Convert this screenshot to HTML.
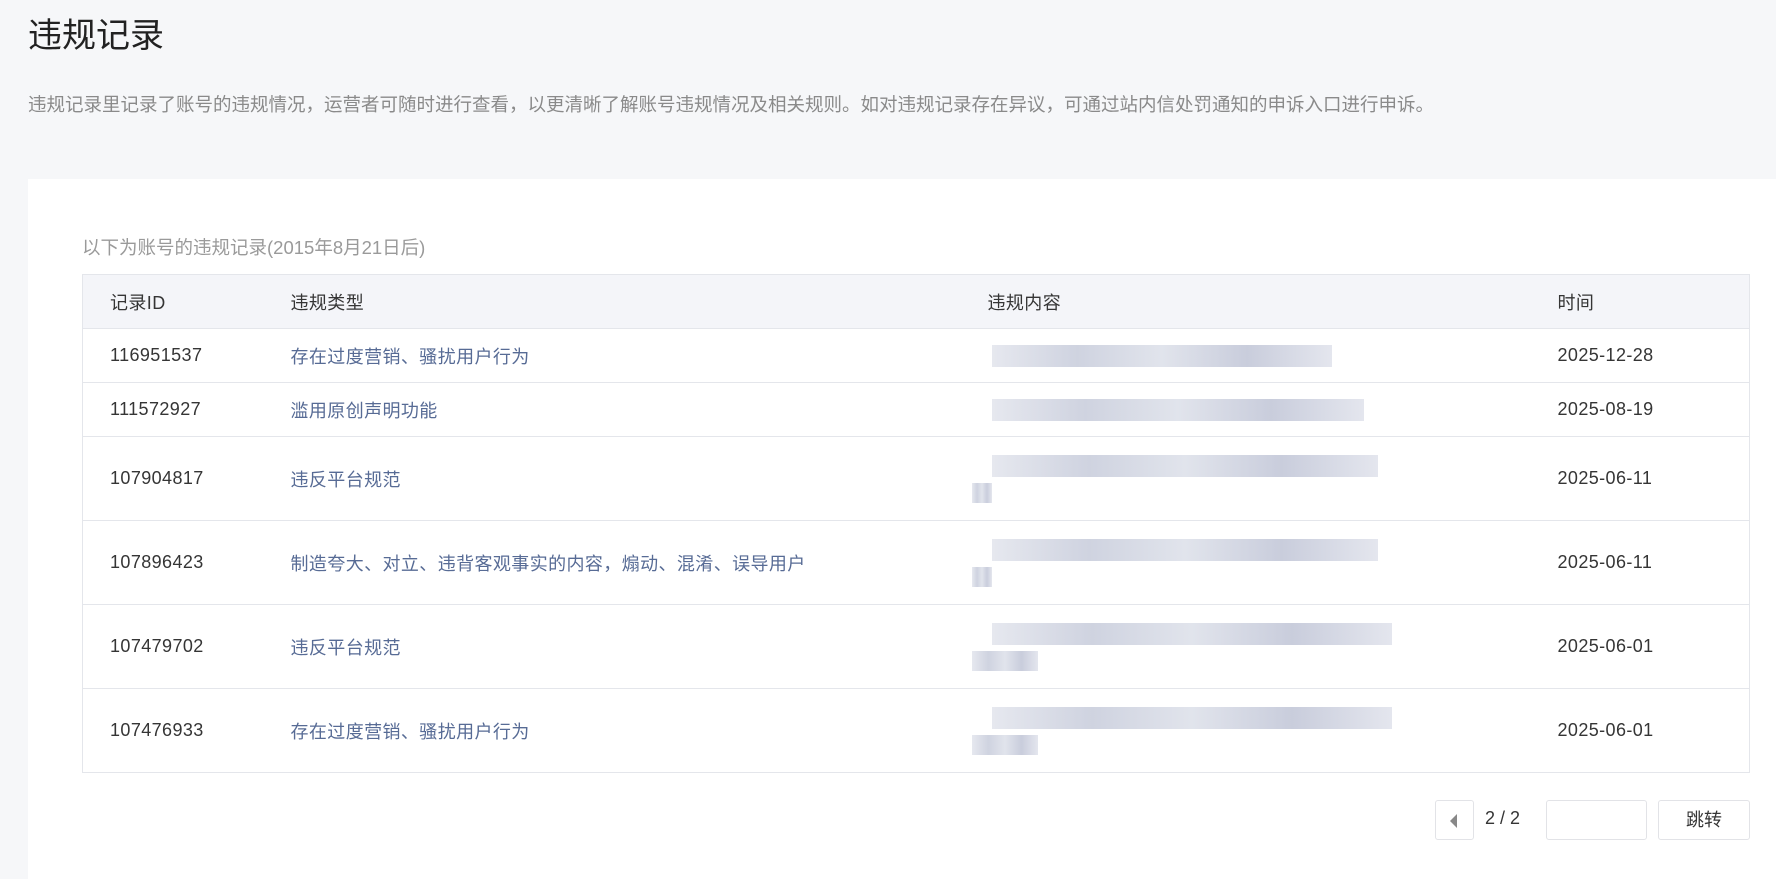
<!DOCTYPE html>
<html><head><meta charset="utf-8"><style>
*{margin:0;padding:0;box-sizing:border-box}
body{width:1776px;height:850px;background:#f6f7f9;font-family:"Liberation Sans","Noto Sans CJK SC",sans-serif;color:#353535;overflow:hidden;position:relative}
.abs{position:absolute;white-space:nowrap}
h1{position:absolute;left:28px;top:8px;font-size:34px;font-weight:normal;color:#222}
.desc{left:28px;top:91px;font-size:18.5px;color:#8a8a8a}
.card{position:absolute;left:28px;top:179px;width:1748px;height:700px;background:#fff}
.cap{left:82px;top:234px;font-size:18.5px;color:#9a9a9a}
table{position:absolute;left:82px;top:274px;width:1668px;border-collapse:collapse;border:1px solid #e4e6eb;font-size:18px;letter-spacing:0.4px}
th{background:#f4f5f9;font-weight:normal;text-align:left;height:54px;color:#353535}
td,th{border-bottom:1px solid #e4e6eb;padding:0}
td{height:54px}
tr.t td{height:84px}
.c1{padding-left:27px;width:208px}
.c2{width:697px}
.c3{width:570px}
a{color:#576b95;text-decoration:none}
.blur{display:inline-block;height:22px;background:linear-gradient(90deg,#e6e8ef,#cfd3e0,#e1e4ec,#c9cddc,#e4e6ee);vertical-align:middle;margin-left:4px}
.b2{display:block;margin:6px 0 0 -16px;height:20px}
.pg{position:absolute;top:800px;height:40px;border:1px solid #e2e3e7;border-radius:3px;background:#fff}
</style></head><body>
<h1>违规记录</h1>
<div class="abs desc">违规记录里记录了账号的违规情况，运营者可随时进行查看，以更清晰了解账号违规情况及相关规则。如对违规记录存在异议，可通过站内信处罚通知的申诉入口进行申诉。</div>
<div class="card"></div>
<div class="abs cap">以下为账号的违规记录(2015年8月21日后)</div>
<table>
<tr><th class="c1">记录ID</th><th class="c2">违规类型</th><th class="c3">违规内容</th><th>时间</th></tr>
<tr><td class="c1">116951537</td><td><a>存在过度营销、骚扰用户行为</a></td><td><span class="blur" style="width:340px"></span></td><td>2025-12-28</td></tr>
<tr><td class="c1">111572927</td><td><a>滥用原创声明功能</a></td><td><span class="blur" style="width:372px"></span></td><td>2025-08-19</td></tr>
<tr class="t"><td class="c1">107904817</td><td><a>违反平台规范</a></td><td><span class="blur" style="width:386px"></span><span class="blur b2" style="width:20px"></span></td><td>2025-06-11</td></tr>
<tr class="t"><td class="c1">107896423</td><td><a>制造夸大、对立、违背客观事实的内容，煽动、混淆、误导用户</a></td><td><span class="blur" style="width:386px"></span><span class="blur b2" style="width:20px"></span></td><td>2025-06-11</td></tr>
<tr class="t"><td class="c1">107479702</td><td><a>违反平台规范</a></td><td><span class="blur" style="width:400px"></span><span class="blur b2" style="width:66px"></span></td><td>2025-06-01</td></tr>
<tr class="t"><td class="c1">107476933</td><td><a>存在过度营销、骚扰用户行为</a></td><td><span class="blur" style="width:400px"></span><span class="blur b2" style="width:66px"></span></td><td>2025-06-01</td></tr>
</table>
<div class="pg" style="left:1435px;width:39px"><div style="position:absolute;left:14px;top:13px;width:0;height:0;border-top:7px solid transparent;border-bottom:7px solid transparent;border-right:7px solid #888"></div></div>
<div class="abs" style="left:1485px;top:808px;font-size:18px">2 / 2</div>
<div class="pg" style="left:1546px;width:101px"></div>
<div class="pg" style="left:1658px;width:92px;text-align:center;line-height:38px;font-size:18px">跳转</div>
</body></html>
